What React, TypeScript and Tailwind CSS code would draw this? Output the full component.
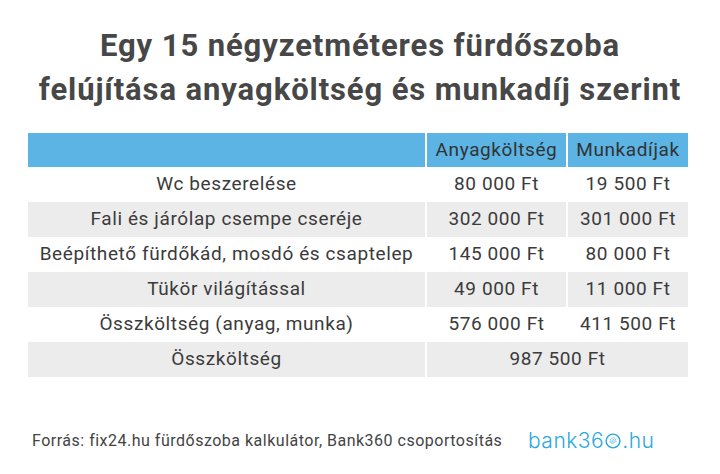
import React from "react";

const rows: [string, string, string][] = [
  ["Wc beszerelése", "80 000 Ft", "19 500 Ft"],
  ["Fali és járólap csempe cseréje", "302 000 Ft", "301 000 Ft"],
  ["Beépíthető fürdőkád, mosdó és csaptelep", "145 000 Ft", "80 000 Ft"],
  ["Tükör világítással", "49 000 Ft", "11 000 Ft"],
  ["Összköltség (anyag, munka)", "576 000 Ft", "411 500 Ft"],
];

export default function App() {
  return (
    <div className="w-[720px] h-[474px] bg-white overflow-hidden font-['Roboto',sans-serif] text-[#3b3b3b]">
      <h1 className="pt-[24px] text-center text-[31px] leading-[44px] font-bold tracking-[0.9px] text-[#474747]">
        Egy 15 négyzetméteres fürdőszoba
        <br />
        felújítása anyagköltség és munkadíj szerint
      </h1>
      <div className="mt-[21px] ml-[28px] w-[660px] flex flex-col text-[19px] tracking-[0.6px]">
        <div className="flex h-[34px] gap-[2px] bg-white">
          <div className="w-[397px] bg-[#5bb4e4]" />
          <div className="w-[139px] bg-[#5bb4e4] flex items-center justify-center text-[#333]">Anyagköltség</div>
          <div className="flex-1 bg-[#5bb4e4] flex items-center justify-center text-[#333]">Munkadíjak</div>
        </div>
        {rows.map((r, i) => {
          const bg = i % 2 === 1 ? "bg-[#ececec]" : "bg-white";
          return (
            <div key={i} className="flex h-[35px] gap-[2px]">
              <div className={`w-[397px] ${bg} flex items-center justify-center`}>{r[0]}</div>
              <div className={`w-[139px] ${bg} flex items-center justify-center`}>{r[1]}</div>
              <div className={`flex-1 ${bg} flex items-center justify-center`}>{r[2]}</div>
            </div>
          );
        })}
        <div className="flex h-[35px] gap-[2px]">
          <div className="w-[397px] bg-[#ececec] flex items-center justify-center">Összköltség</div>
          <div className="flex-1 bg-[#ececec] flex items-center justify-center">987 500 Ft</div>
        </div>
      </div>
      <div className="mt-[52px] flex items-center">
        <div className="ml-[32px] w-[470px] shrink-0 text-[16px] leading-[24px] tracking-[0.5px] text-[#444] whitespace-nowrap">
          Forrás: fix24.hu fürdőszoba kalkulátor, Bank360 csoportosítás
        </div>
        <div className="ml-[26px] flex items-end font-['Inter',sans-serif] font-light text-[21px] leading-[24px] tracking-[0.5px] text-[#2aa8df]">
          <span>bank36</span>
          <svg width="16" height="16" viewBox="0 0 20 20" className="mb-[4px] mx-[1px]">
            <circle cx="10" cy="10" r="8.6" fill="none" stroke="#2aa8df" strokeWidth="1.8" />
            <path d="M6.5 12.5 C6 8 8 6 10 6 C12.5 6 14 8 13.5 11.5 M8.5 13.5 C8 10 9 8.3 10.2 8.3 C11.5 8.3 12 10 11.5 12.5 M10 10 L10 14" fill="none" stroke="#6cc4ea" strokeWidth="1" />
          </svg>
          <span>.hu</span>
        </div>
      </div>
    </div>
  );
}
